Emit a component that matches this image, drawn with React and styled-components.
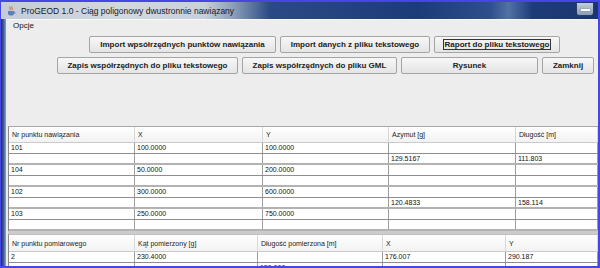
import React from "react";
import styled, { createGlobalStyle } from "styled-components";

const GlobalStyle = createGlobalStyle`
  body {
    margin: 0;
    background: #4444e4;
    font-family: "Liberation Sans", Arial, sans-serif;
  }
`;

const Frame = styled.div`
  width: 600px;
  height: 268px;
  box-sizing: border-box;
  border: 2px solid #4646e6;
  border-left-width: 1px;
  overflow: hidden;
  display: flex;
  flex-direction: column;
  background: #1d3b74;
`;

const TitleBar = styled.div`
  flex: none;
  height: 17px;
  display: flex;
  align-items: center;
  padding-left: 6px;
  background: linear-gradient(
    90deg,
    #c4ccd8 0%,
    #d2d8e1 20%,
    #c8d0dc 34%,
    #8b9dbb 39%,
    #2b4a85 45%,
    #1c3b79 70%,
    #2f4f8c 82%,
    #5271a6 85%,
    #1e3c78 89%,
    #1a3670 100%
  );
`;

const Title = styled.span`
  font-size: 8.5px;
  color: #1a1a1a;
  margin-left: 5px;
  flex: 1;
  white-space: nowrap;
`;

const MinButton = styled.div`
  width: 18px;
  height: 13px;
  margin: -3px 4px 0 0;
  box-sizing: border-box;
  border: 1px solid #2a3e64;
  border-top: none;
  border-radius: 0 0 3px 3px;
  background: linear-gradient(#c2cddd, #8a9cb8);
  display: flex;
  align-items: center;
  justify-content: center;

  &::after {
    content: "";
    width: 9px;
    height: 2px;
    margin-top: 3px;
    background: #ffffff;
    box-shadow: 0 0 1px #333;
  }
`;

const Body = styled.div`
  flex: 1;
  min-height: 0;
  display: flex;
`;

const SideFrame = styled.div`
  flex: none;
  width: 5px;
  background: linear-gradient(90deg, #1b2d63, #3d5d9a 50%, #8ea2c2);
`;

const Client = styled.div`
  flex: 1;
  min-width: 0;
  background: #ededed;
  display: flex;
  flex-direction: column;
`;

const MenuBar = styled.div`
  flex: none;
  height: 12px;
  border-top: 1px solid #f8f8f8;
  box-sizing: border-box;
  padding-left: 7px;
  display: flex;
  align-items: center;
`;

const MenuItem = styled.span`
  font-size: 8px;
  color: #111;
`;

const ButtonArea = styled.div`
  flex: none;
  padding-top: 5px;
  display: flex;
  flex-direction: column;
  gap: 4px;
`;

const ButtonRow = styled.div`
  display: flex;
  gap: 4px;
  padding-left: ${(p) => p.$indent}px;
`;

const Button = styled.button`
  width: ${(p) => p.$w}px;
  height: 17px;
  padding: 0;
  box-sizing: border-box;
  border: 1px solid #a4a4a4;
  border-radius: 2px;
  background: linear-gradient(#f7f7f7, #e4e4e4);
  font-family: "Liberation Sans", Arial, sans-serif;
  font-weight: bold;
  font-size: 8px;
  color: #222;
  display: flex;
  align-items: center;
  justify-content: center;
  white-space: nowrap;
`;

const FocusLabel = styled.span`
  border: 1px solid #333;
  padding: 0 1px;
  line-height: 9px;
`;

const TableBlock = styled.div`
  flex: none;
  margin-top: ${(p) => p.$top || 0}px;
  margin-left: 2px;
  background: #ffffff;
  border-top: 1px solid ${(p) => (p.$top ? "#a8a8a8" : "#c0c0c0")};
  border-left: 1px solid #8a8a8a;
`;

const HeaderRow = styled.div`
  display: grid;
  grid-template-columns: ${(p) => p.$cols};
  height: ${(p) => p.$h}px;
  box-sizing: border-box;
  border-bottom: 1px solid #cacaca;
  background: linear-gradient(#ffffff, #f2f2f2);
`;

const HeaderCell = styled.div`
  border-right: 1px solid #d8d8d8;
  padding-left: 3px;
  font-size: 7px;
  color: #222;
  display: flex;
  align-items: center;
  white-space: nowrap;
  overflow: hidden;
`;

const Row = styled.div`
  display: grid;
  grid-template-columns: ${(p) => p.$cols};
  height: 11px;
  box-sizing: border-box;
  border-bottom: ${(p) => (p.$thick ? "2px solid #b2b2b2" : "1px solid #8e8e8e")};
`;

const Cell = styled.div`
  border-right: 1px solid #9c9c9c;
  padding-left: 2px;
  font-size: 7px;
  line-height: 10px;
  color: #111;
  white-space: nowrap;
  overflow: hidden;
`;

const Divider = styled.div`
  flex: none;
  height: 3px;
  margin-left: 2px;
  background: #cbcbcb;
`;

const AppIcon = () => (
  <svg width="9" height="10" viewBox="0 0 9 10">
    <path d="M3 0.5 C2 2 4 2.5 3 4 M5 0.5 C4 2 6 2.5 5 4" stroke="#d9531e" strokeWidth="0.9" fill="none" />
    <path d="M1 5 H7 V7.5 C7 9 5.5 9.5 4 9.5 C2.5 9.5 1 9 1 7.5 Z" fill="#5b7fb8" />
    <path d="M7 5.8 C8.6 5.8 8.6 7.6 7 7.6" stroke="#5b7fb8" strokeWidth="0.8" fill="none" />
  </svg>
);

const cols1 = "126px 128px 126px 127px 1fr";
const cols2 = "126px 123px 125px 123px 1fr";

const head1 = ["Nr punktu nawiązania", "X", "Y", "Azymut [g]", "Długość [m]"];
const rows1 = [
  ["101", "100.0000", "100.0000", "", ""],
  ["", "", "", "129.5167", "111.803"],
  ["104", "50.0000", "200.0000", "", ""],
  ["", "", "", "", ""],
  ["102", "300.0000", "600.0000", "", ""],
  ["", "", "", "120.4833", "158.114"],
  ["103", "250.0000", "750.0000", "", ""],
  ["", "", "", "", ""],
];

const head2 = ["Nr punktu pomiarowego", "Kąt pomierzony [g]", "Długość pomierzona [m]", "X", "Y"];
const rows2 = [
  ["2", "230.4000", "", "176.007", "290.187"],
  ["", "", "150.000", "", ""],
];

const DataTable = ({ cols, head, rows, headH, top }) => (
  <TableBlock $top={top}>
    <HeaderRow $cols={cols} $h={headH}>
      {head.map((h) => (
        <HeaderCell key={h}>{h}</HeaderCell>
      ))}
    </HeaderRow>
    {rows.map((r, i) => (
      <Row key={i} $cols={cols} $thick={i % 2 === 1}>
        {r.map((c, j) => (
          <Cell key={j}>{c}</Cell>
        ))}
      </Row>
    ))}
  </TableBlock>
);

export default function App() {
  return (
    <>
      <GlobalStyle />
      <Frame>
        <TitleBar>
          <AppIcon />
          <Title>ProGEOD 1.0 - Ciąg poligonowy dwustronnie nawiązany</Title>
          <MinButton />
        </TitleBar>
        <Body>
          <SideFrame />
          <Client>
            <MenuBar>
              <MenuItem>Opcje</MenuItem>
            </MenuBar>
            <ButtonArea>
              <ButtonRow $indent={83}>
                <Button $w={187}>Import wpsółrzędnych punktów nawiązania</Button>
                <Button $w={150}>Import danych z pliku tekstowego</Button>
                <Button $w={126}>
                  <FocusLabel>Raport do pliku tekstowego</FocusLabel>
                </Button>
              </ButtonRow>
              <ButtonRow $indent={51}>
                <Button $w={181}>Zapis współrzędnych do pliku tekstowego</Button>
                <Button $w={155}>Zapis współrzędnych do pliku GML</Button>
                <Button $w={137}>Rysunek</Button>
                <Button $w={52}>Zamknij</Button>
              </ButtonRow>
            </ButtonArea>
            <DataTable cols={cols1} head={head1} rows={rows1} headH={16} top={52} />
            <Divider />
            <DataTable cols={cols2} head={head2} rows={rows2} headH={17} />
          </Client>
        </Body>
      </Frame>
    </>
  );
}
